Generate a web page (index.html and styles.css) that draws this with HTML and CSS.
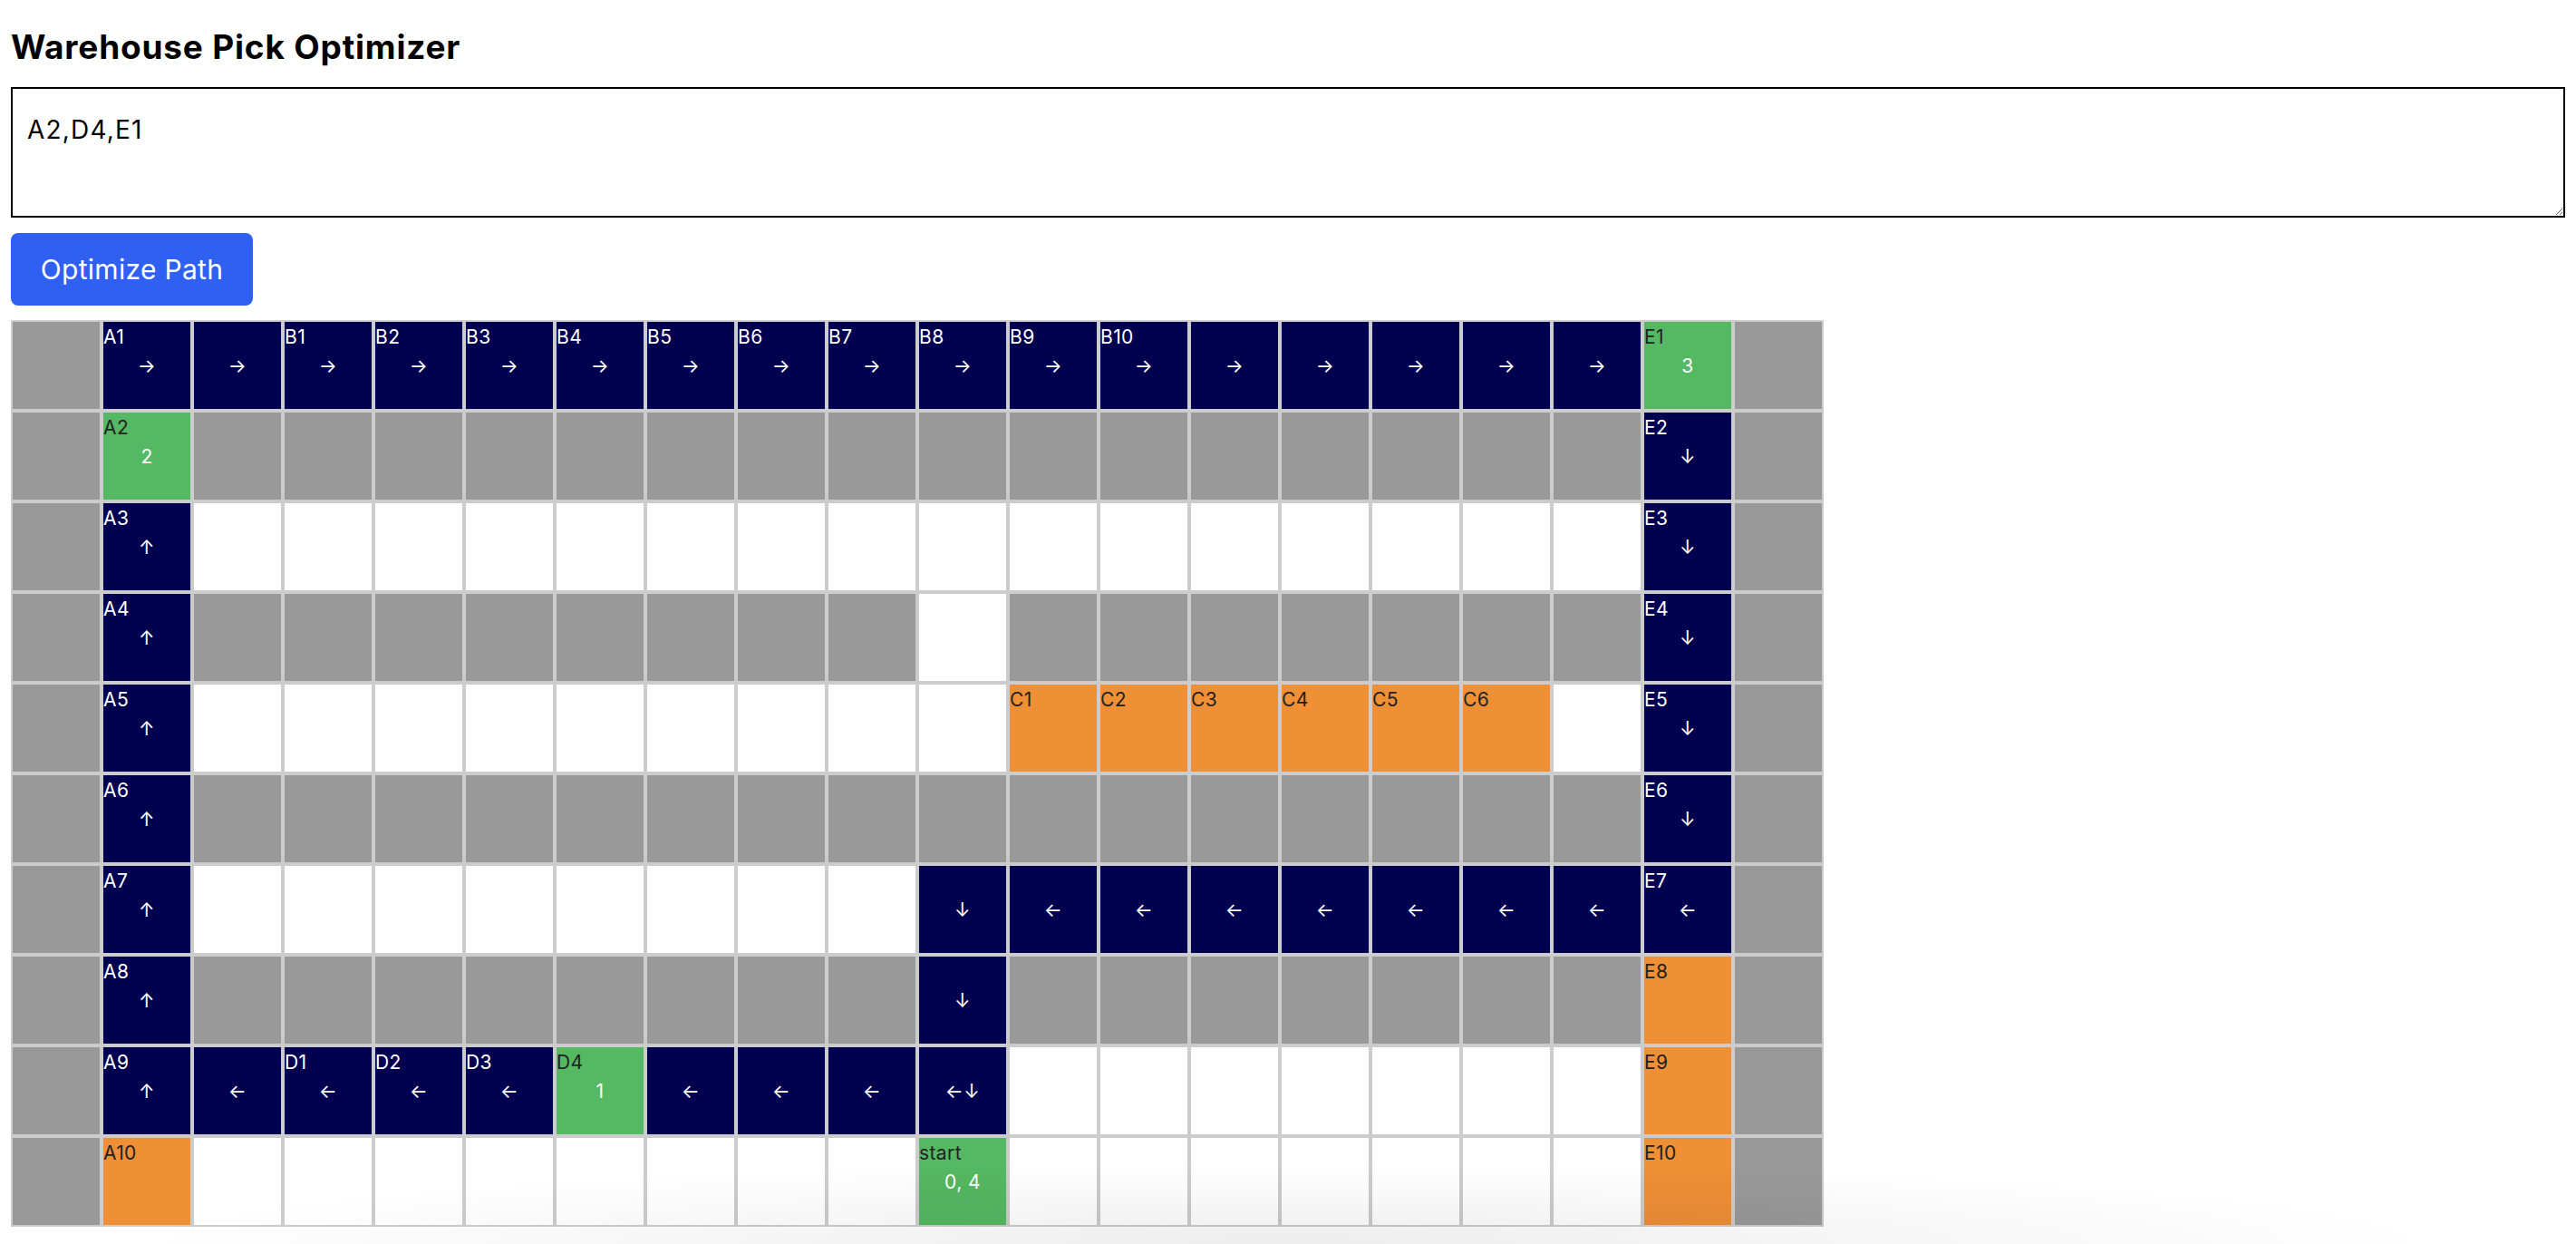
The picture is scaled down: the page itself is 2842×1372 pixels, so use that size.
FILE: index.html
```html
<!DOCTYPE html>
<html lang="en">
<head>
    <meta charset="UTF-8">
    <meta name="viewport" content="width=device-width, initial-scale=1.0">
    <title>Warehouse Pick Optimizer</title>
    <link rel="stylesheet" href="styles.css">
</head>
<body>
    <h1>Warehouse Pick Optimizer</h1>
    <textarea id="picks">A2,D4,E1</textarea>
    <div class="actions">
        <button id="optimize">Optimize Path</button>
    </div>
    <section id="warehouse" class="warehouse"></section>

    <script>
        // x = shelf, . = aisle, P = path, G = pick / start, O = location
        const rep = (t, n) => new Array(n).fill(t);
        const layout = [
            ['x', ...rep('P→', 17), 'G3', 'x'],
            ['x', 'G2', ...rep('x', 16), 'P↓', 'x'],
            ['x', 'P↑', ...rep('.', 16), 'P↓', 'x'],
            ['x', 'P↑', ...rep('x', 8), '.', ...rep('x', 7), 'P↓', 'x'],
            ['x', 'P↑', ...rep('.', 9), ...rep('O', 6), '.', 'P↓', 'x'],
            ['x', 'P↑', ...rep('x', 16), 'P↓', 'x'],
            ['x', 'P↑', ...rep('.', 8), 'P↓', ...rep('P←', 7), 'P←', 'x'],
            ['x', 'P↑', ...rep('x', 8), 'P↓', ...rep('x', 7), 'O', 'x'],
            ['x', 'P↑', ...rep('P←', 4), 'G1', ...rep('P←', 3), 'P←↓', ...rep('.', 7), 'O', 'x'],
            ['x', 'O', ...rep('.', 8), 'G0, 4', ...rep('.', 7), 'O', 'x'],
        ];

        const labels = {};
        for (let r = 0; r < 10; r++) {
            labels[`${r},1`] = `A${r + 1}`;
            labels[`${r},18`] = `E${r + 1}`;
        }
        for (let i = 0; i < 10; i++) labels[`0,${i + 3}`] = `B${i + 1}`;
        for (let i = 0; i < 6; i++) labels[`4,${i + 11}`] = `C${i + 1}`;
        for (let i = 0; i < 4; i++) labels[`8,${i + 3}`] = `D${i + 1}`;
        labels['9,10'] = 'start';

        const kinds = { x: 'shelf', '.': 'aisle', P: 'path', G: 'pick', O: 'slot' };
        const grid = document.getElementById('warehouse');

        layout.forEach((row, r) => {
            row.forEach((token, c) => {
                const cell = document.createElement('div');
                cell.className = `cell ${kinds[token[0]]}`;
                const label = document.createElement('div');
                label.className = 'label';
                label.textContent = labels[`${r},${c}`] || '';
                const value = document.createElement('div');
                value.className = 'value';
                value.textContent = token.slice(1);
                cell.append(label, value);
                grid.appendChild(cell);
            });
        });
    </script>
</body>
</html>
```

FILE: styles.css
```css
body {
    margin: 12px;
    font-family: Inter, "Noto Sans", sans-serif;
    color: #000;
    background-color: #fff;
}

body::after {
    content: '';
    position: fixed;
    left: 150px;
    right: 150px;
    bottom: 0;
    height: 90px;
    background: radial-gradient(ellipse 50% 100% at 50% 100%, rgba(0, 0, 0, 0.07), rgba(0, 0, 0, 0));
    pointer-events: none;
}

h1 {
    margin: 18px 0 22px;
    font-size: 37px;
    line-height: 44px;
    font-weight: 700;
    letter-spacing: 0.8px;
}

textarea {
    display: block;
    box-sizing: border-box;
    width: 100%;
    height: 144px;
    margin: 0;
    padding: 29px 16px 0;
    border: 2px solid #000;
    font-family: Inter, "Noto Sans", sans-serif;
    font-size: 28px;
    line-height: 32px;
    letter-spacing: 1.2px;
    color: #000;
    resize: both;
}

.actions {
    margin-top: 17px;
}

button {
    display: block;
    width: 267px;
    height: 80px;
    padding: 0;
    border: none;
    border-radius: 8px;
    background-color: #2f60f2;
    color: #fff;
    font-family: Inter, "Noto Sans", sans-serif;
    font-size: 30px;
    letter-spacing: 0.3px;
}

.warehouse {
    display: grid;
    grid-template-columns: repeat(20, 96px);
    grid-auto-rows: 96px;
    gap: 4px;
    padding: 2px;
    margin-top: 16px;
    width: max-content;
    background-color: #ccc;
}

.cell {
    box-sizing: border-box;
    padding-top: 5px;
    font-size: 21px;
    letter-spacing: 0.4px;
    color: #fff;
}

.label {
    height: 24px;
    line-height: 24px;
    white-space: nowrap;
}

.value {
    margin-top: 8px;
    line-height: 24px;
    text-align: center;
    white-space: nowrap;
}

.shelf {
    background-color: #999;
}

.aisle {
    background-color: #fff;
}

.path {
    background-color: #000050;
}

.pick {
    background-color: #55b862;
}

.slot {
    background-color: #ef8f36;
}

.pick .label,
.slot .label {
    color: #222;
}
```
